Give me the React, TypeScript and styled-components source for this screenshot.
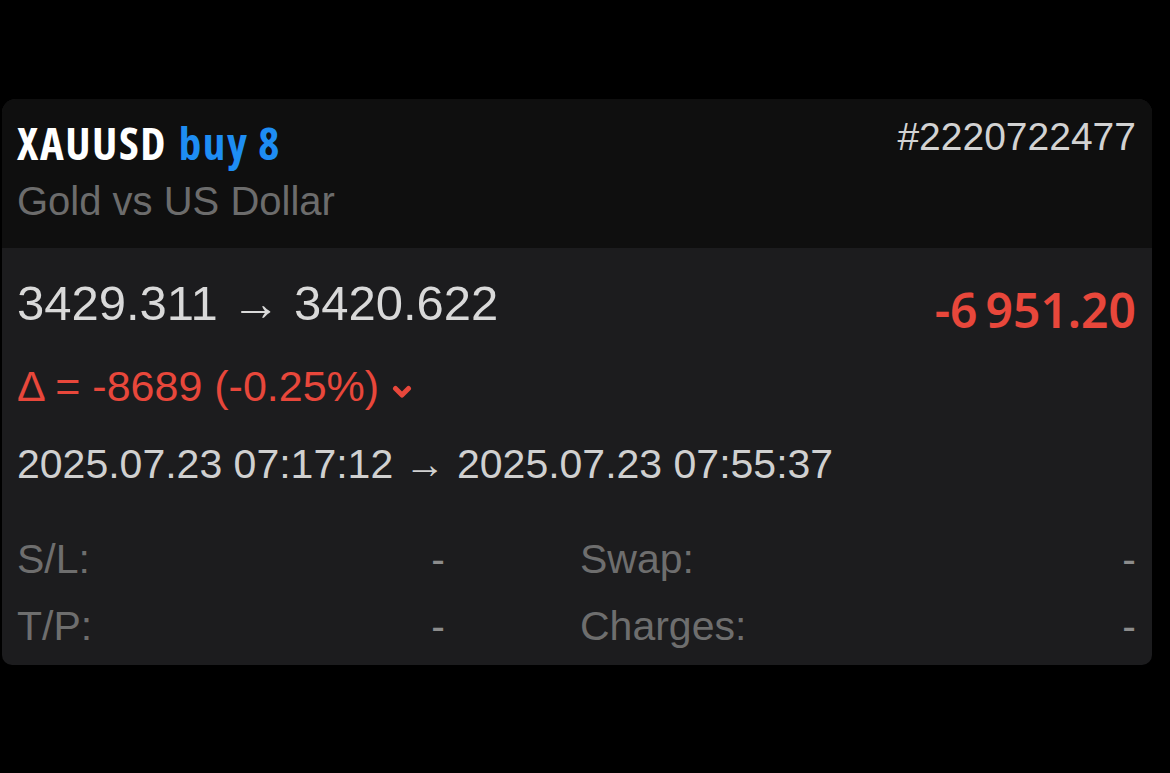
import React, { FunctionComponent } from "react";
import styled, { createGlobalStyle } from "styled-components";

const GlobalStyle = createGlobalStyle`
  html, body {
    margin: 0;
    padding: 0;
    background: #000;
  }
  body {
    font-family: "Liberation Sans", Arial, sans-serif;
    -webkit-font-smoothing: antialiased;
  }
`;

const Page = styled.div`
  width: 1170px;
  height: 773px;
  box-sizing: border-box;
  padding: 99px 18px 0 2px;
  background: #000;
`;

const Card = styled.div`
  width: 1150px;
  border-radius: 14px 14px 10px 10px;
  overflow: hidden;
  background: #1c1c1e;
`;

const Header = styled.div`
  background: #0f0f0f;
  padding: 21px 16px 23px 15px;
`;

const TitleRow = styled.div`
  display: flex;
  justify-content: space-between;
  align-items: flex-start;
`;

const Title = styled.div`
  font-family: "Open Sans", sans-serif;
  font-stretch: 75%;
  font-weight: 700;
  font-size: 45px;
  line-height: 45px;
  letter-spacing: 1.6px;
  color: #ffffff;
  white-space: nowrap;
`;

const Side = styled.span`
  color: #1e8df3;
  margin-left: 2px;
`;

const OrderId = styled.div`
  font-size: 39px;
  line-height: 39px;
  margin-top: -3px;
  color: #d2d2d2;
`;

const Subtitle = styled.div`
  margin-top: 12px;
  font-size: 40px;
  line-height: 48px;
  color: #6c6c6c;
`;

const Body = styled.div`
  padding: 30px 16px 5px 15px;
`;

const PriceRow = styled.div`
  display: flex;
  justify-content: space-between;
  align-items: flex-start;
`;

const Prices = styled.div`
  font-size: 49px;
  line-height: 50px;
  color: #d9d9d9;
  white-space: nowrap;
`;

const Profit = styled.div<{ negative: boolean }>`
  font-family: "Noto Sans", sans-serif;
  font-stretch: 62.5%;
  font-weight: 600;
  font-size: 48px;
  line-height: 50px;
  margin-top: 7px;
  color: ${(p) => (p.negative ? "#e8473b" : "#1e8df3")};
  white-space: nowrap;
`;

const Delta = styled.div`
  display: flex;
  align-items: center;
  margin-top: 30px;
  font-size: 43px;
  line-height: 43px;
  color: #e8473b;
  white-space: nowrap;
`;

const Chevron = styled.svg`
  width: 20px;
  height: 14px;
  margin-left: 13px;
  margin-top: 10px;
`;

const Dates = styled.div`
  margin-top: 36px;
  font-size: 41px;
  line-height: 40px;
  color: #d0d0d0;
  white-space: nowrap;
`;

const InfoGrid = styled.div`
  display: grid;
  grid-template-columns: 428px 1fr;
  column-gap: 135px;
  margin-top: 42px;
`;

const InfoItem = styled.div`
  display: flex;
  justify-content: space-between;
  font-size: 41px;
  line-height: 67px;
`;

const InfoLabel = styled.span`
  color: #6e6e6e;
`;

const InfoValue = styled.span`
  color: #8c8c8c;
`;

type Info = { label: string; value: string };

const infos: Info[] = [
  { label: "S/L:", value: "-" },
  { label: "Swap:", value: "-" },
  { label: "T/P:", value: "-" },
  { label: "Charges:", value: "-" },
];

const DownChevron = () => (
  <Chevron viewBox="0 0 20 14">
    <path
      d="M3.5 3.5 L10 10 L16.5 3.5"
      fill="none"
      stroke="#e8473b"
      strokeWidth="5"
      strokeLinecap="round"
      strokeLinejoin="round"
    />
  </Chevron>
);

export const PositionCard: FunctionComponent = () => {
  return (
    <Card>
      <Header>
        <TitleRow>
          <Title>
            XAUUSD <Side>buy 8</Side>
          </Title>
          <OrderId>#2220722477</OrderId>
        </TitleRow>
        <Subtitle>Gold vs US Dollar</Subtitle>
      </Header>
      <Body>
        <PriceRow>
          <Prices>3429.311 → 3420.622</Prices>
          <Profit negative={true}>-6{"\u2009"}951.20</Profit>
        </PriceRow>
        <Delta>
          Δ = -8689 (-0.25%)
          <DownChevron />
        </Delta>
        <Dates>2025.07.23 07:17:12 → 2025.07.23 07:55:37</Dates>
        <InfoGrid>
          {infos.map((i) => (
            <InfoItem key={i.label}>
              <InfoLabel>{i.label}</InfoLabel>
              <InfoValue>{i.value}</InfoValue>
            </InfoItem>
          ))}
        </InfoGrid>
      </Body>
    </Card>
  );
};

export default function App() {
  return (
    <>
      <GlobalStyle />
      <Page>
        <PositionCard />
      </Page>
    </>
  );
}
